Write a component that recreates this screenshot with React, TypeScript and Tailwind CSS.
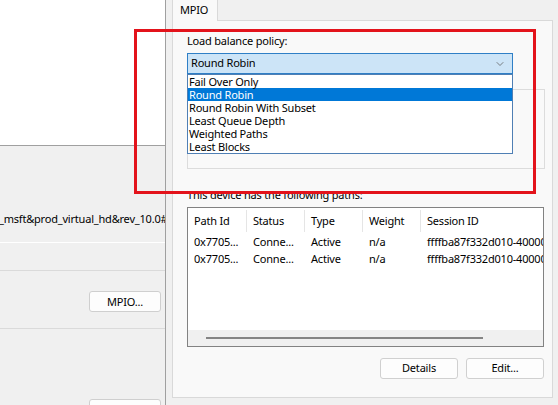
import { ChevronDown } from "lucide-react";

const policies = [
    "Fail Over Only",
    "Round Robin",
    "Round Robin With Subset",
    "Least Queue Depth",
    "Weighted Paths",
    "Least Blocks",
];

const columns = [
    { label: "Path Id", width: "w-[59px]" },
    { label: "Status", width: "w-[58px]" },
    { label: "Type", width: "w-[58px]" },
    { label: "Weight", width: "w-[58px]" },
    { label: "Session ID", width: "w-[130px]" },
];

const paths = [
    ["0x7705...", "Conne...", "Active", "n/a", "ffffba87f332d010-4000013700000003"],
    ["0x7705...", "Conne...", "Active", "n/a", "ffffba87f332d010-4000013700000004"],
];

function LeftPane() {
    return (
        <div className="flex w-[166px] shrink-0 flex-col border-r border-[#a0a0a0]">
            <div className="h-[146px] shrink-0 border-b border-[#a0a0a0] bg-white" />
            <div className="flex flex-1 flex-col overflow-hidden">
                <div className="mt-[65px] h-[16px] shrink-0 overflow-hidden whitespace-nowrap leading-[16px]">
                    <span className="-ml-px">_msft&amp;prod_virtual_hd&amp;rev_10.0#1&amp;2f</span>
                </div>
                <div className="mt-[15px] h-px shrink-0 bg-white" />
                <div className="mt-[27px] h-px shrink-0 bg-[#dadada]" />
                <div className="flex shrink-0 justify-end pr-[4px] pt-[20px]">
                    <button className="h-[21px] w-[72px] rounded-[3px] border border-[#cfcfcf] bg-[#fdfdfd] leading-[19px]">
                        MPIO...
                    </button>
                </div>
                <div className="mt-[16px] h-px shrink-0 bg-[#dadada]" />
                <div className="flex shrink-0 justify-end pr-[4px] pt-[70px]">
                    <button className="h-[21px] w-[72px] rounded-[3px] border border-[#cfcfcf] bg-[#fdfdfd]" />
                </div>
            </div>
        </div>
    );
}

function PathsList() {
    return (
        <div className="mt-[6px] flex h-[140px] w-[357px] flex-col overflow-hidden border border-[#828282] bg-white">
            <div className="flex h-[26px] shrink-0 items-center whitespace-nowrap">
                {columns.map((col, i) => (
                    <div
                        key={col.label}
                        className={`${col.width} flex h-[22px] shrink-0 items-center pl-[6px] ${i < columns.length - 1 ? "border-r border-[#e5e5e5]" : ""}`}
                    >
                        {col.label}
                    </div>
                ))}
            </div>
            <div className="flex-1">
                {paths.map((row, r) => (
                    <div key={r} className="flex h-[17px] items-center whitespace-nowrap">
                        {row.map((cell, i) => (
                            <div
                                key={i}
                                className={`${columns[i].width} shrink-0 overflow-hidden pl-[6px]`}
                            >
                                {cell}
                            </div>
                        ))}
                    </div>
                ))}
            </div>
            <div className="flex h-[16px] shrink-0 items-center bg-[#f0f0f0] pl-[18px]">
                <div className="h-[2px] w-[277px] bg-[#858585]" />
            </div>
        </div>
    );
}

function MpioTab() {
    return (
        <div className="relative flex flex-1 flex-col pl-[6px] pr-[5px]">
            <div className="flex">
                <div className="relative z-10 -mb-px h-[21px] w-[46px] border-x border-[#d9d9d9] bg-[#f9f9f9] pl-[7px] pt-[1px] leading-[18px]">
                    MPIO
                </div>
            </div>
            <div className="flex h-[378px] flex-col border border-[#d9d9d9] bg-[#f9f9f9] pl-[14px]">
                <div className="mt-[12px] leading-[16px]">Load balance policy:</div>
                <div className="relative mt-[4px]">
                    <div className="flex h-[21px] w-[326px] items-center justify-between border border-[#2f7fc6] bg-[#cce4f7] pl-[3px] pr-[6px]">
                        <span>Round Robin</span>
                        <ChevronDown className="size-[12px] text-[#5a5a5a]" strokeWidth={1.5} />
                    </div>
                    <div className="absolute left-0 top-[21px] z-20 w-[326px] border border-[#4f7fb4] bg-white">
                        {policies.map((p) => (
                            <div
                                key={p}
                                className={`h-[13px] whitespace-nowrap pl-[1px] leading-[13px] ${p === "Round Robin" ? "bg-[#0078d7] text-white" : ""}`}
                            >
                                {p}
                            </div>
                        ))}
                    </div>
                </div>
                <div className="mt-[15px] h-[80px] w-[358px] border border-[#dcdcdc]" />
                <div className="mt-[19px] leading-[13px]">This device has the following paths:</div>
                <PathsList />
                <div className="mt-[11px] flex w-[357px] justify-end gap-[8px]">
                    <button className="h-[21px] w-[78px] rounded-[3px] border border-[#d0d0d0] bg-[#fdfdfd]">
                        Details
                    </button>
                    <button className="h-[21px] w-[78px] rounded-[3px] border border-[#d0d0d0] bg-[#fdfdfd]">
                        Edit...
                    </button>
                </div>
            </div>
        </div>
    );
}

export default function App() {
    return (
        <div
            className="relative flex h-[405px] w-[558px] overflow-hidden bg-[#f0f0f0] text-[11px] tracking-[-0.2px] text-black"
            style={{ fontFamily: '"Noto Sans", "Open Sans", sans-serif' }}
        >
            <LeftPane />
            <MpioTab />
            {/* red annotation box drawn over the screenshot */}
            <div className="pointer-events-none absolute left-[134px] top-[29px] z-30 h-[165px] w-[402px] border-[3px] border-[#e3131b]" />
        </div>
    );
}
